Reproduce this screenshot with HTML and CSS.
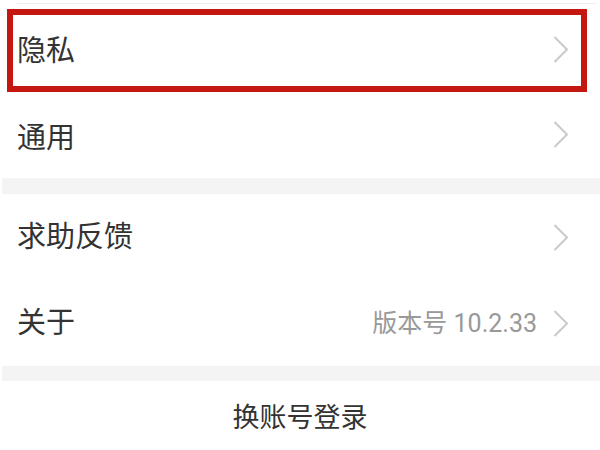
FILE: index.html
```html
<!DOCTYPE html>
<html lang="zh-CN">
<head>
<meta charset="utf-8">
<title>设置</title>
<link rel="stylesheet" href="styles.css">
</head>
<body>
<div class="page">
  <div class="top-line"></div>
  <div class="group">
    <div class="row r1">
      <span class="label">隐私</span>
      <span class="right">
        <svg class="chev" viewBox="0 0 16 27" width="16" height="27"><polyline points="1.5,1 14,13.5 1.5,26" /></svg>
      </span>
      <div class="highlight"></div>
    </div>
    <div class="row r2">
      <span class="label">通用</span>
      <span class="right">
        <svg class="chev" viewBox="0 0 16 27" width="16" height="27"><polyline points="1.5,1 14,13.5 1.5,26" /></svg>
      </span>
    </div>
  </div>
  <div class="gap g1"></div>
  <div class="group">
    <div class="row r3">
      <span class="label">求助反馈</span>
      <span class="right">
        <svg class="chev" viewBox="0 0 16 27" width="16" height="27"><polyline points="1.5,1 14,13.5 1.5,26" /></svg>
      </span>
    </div>
    <div class="row r4">
      <span class="label">关于</span>
      <span class="right">
        <span class="value">版本号 10.2.33</span>
        <svg class="chev" viewBox="0 0 16 27" width="16" height="27"><polyline points="1.5,1 14,13.5 1.5,26" /></svg>
      </span>
    </div>
  </div>
  <div class="gap g2"></div>
  <div class="logout">换账号登录</div>
</div>
</body>
</html>
```

FILE: styles.css
```css
html, body {
  margin: 0;
  padding: 0;
  background: #ffffff;
}

.page {
  width: 600px;
  height: 450px;
  overflow: hidden;
  font-family: Roboto, "Noto Sans CJK SC", "Noto Sans", sans-serif;
  color: #333333;
  display: flex;
  flex-direction: column;
}

.top-line {
  height: 3px;
  margin-left: 17px;
  margin-right: 4px;
  border-bottom: 1px solid #efefef;
  margin-bottom: 3px;
  flex: none;
}

.group {
  display: flex;
  flex-direction: column;
  flex: none;
}

.row {
  position: relative;
  display: flex;
  align-items: center;
  justify-content: space-between;
  padding: 0 31px 0 17px;
  flex: none;
}

.r1 { height: 86px; }
.r2 { height: 85px; }
.r3 { height: 87px; }
.r4 { height: 85px; }

.label {
  font-size: 29px;
  line-height: 1;
  color: #333333;
  letter-spacing: 0;
}

.r1 .label { margin-top: 3px; }
.r2 .label { margin-top: 5px; }

.right {
  display: flex;
  align-items: center;
  gap: 16px;
}

.value {
  font-size: 25px;
  line-height: 1;
  color: #999999;
}

.chev {
  display: block;
  fill: none;
  stroke: #c9c9c9;
  stroke-width: 2;
}

.r1 .chev { margin-top: -2px; }
.r2 .chev { margin-top: -3px; }

.highlight {
  position: absolute;
  left: 7px;
  top: 2px;
  width: 568px;
  height: 71px;
  border: 6px solid #c3170f;
  pointer-events: none;
}

.gap {
  background: #f4f4f4;
  flex: none;
  margin-left: 2px;
}

.g1 { height: 16px; }
.g2 { height: 15px; }

.logout {
  flex: 1;
  display: flex;
  justify-content: center;
  padding-top: 24px;
  font-size: 27px;
  line-height: 1;
  color: #333333;
}
```
